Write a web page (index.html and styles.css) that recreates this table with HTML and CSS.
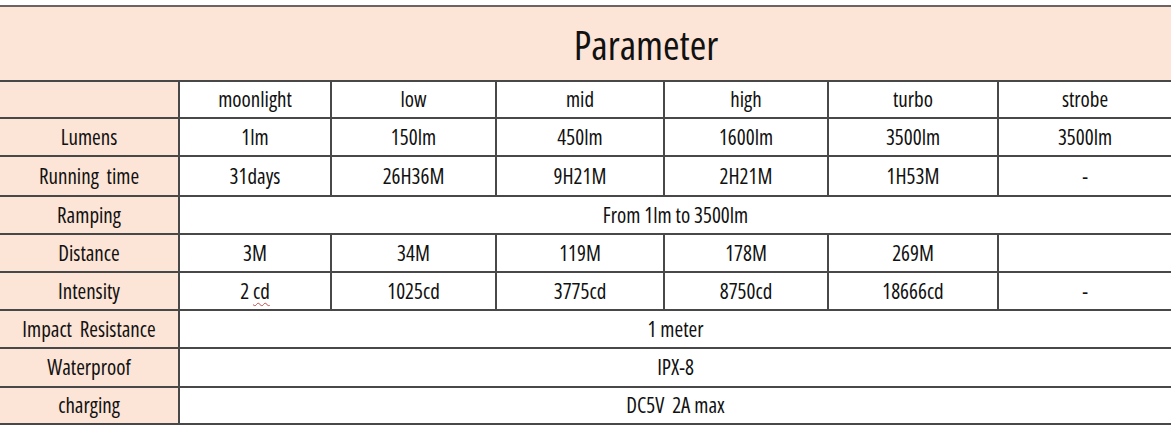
FILE: index.html
```html
<!DOCTYPE html>
<html>
<head>
<meta charset="utf-8">
<link rel="stylesheet" href="styles.css">
</head>
<body>
<table class="spec">
  <colgroup>
    <col class="c-label">
    <col class="c1"><col class="c2"><col class="c3"><col class="c4"><col class="c5"><col class="c6">
  </colgroup>
  <tr class="r-title"><td class="title" colspan="7">Parameter</td></tr>
  <tr class="r-head">
    <td class="label"></td>
    <td>moonlight</td><td>low</td><td>mid</td><td>high</td><td>turbo</td><td>strobe</td>
  </tr>
  <tr class="r1">
    <td class="label">Lumens</td>
    <td>1lm</td><td>150lm</td><td>450lm</td><td>1600lm</td><td>3500lm</td><td>3500lm</td>
  </tr>
  <tr class="r2">
    <td class="label">Running&nbsp; time</td>
    <td>31days</td><td>26H36M</td><td>9H21M</td><td>2H21M</td><td>1H53M</td><td>-</td>
  </tr>
  <tr class="r3">
    <td class="label">Ramping</td>
    <td colspan="6">From 1lm to 3500lm</td>
  </tr>
  <tr class="r4">
    <td class="label">Distance</td>
    <td>3M</td><td>34M</td><td>119M</td><td>178M</td><td>269M</td><td></td>
  </tr>
  <tr class="r5">
    <td class="label">Intensity</td>
    <td>2 <span class="spell">cd</span></td><td>1025cd</td><td>3775cd</td><td>8750cd</td><td>18666cd</td><td>-</td>
  </tr>
  <tr class="r6">
    <td class="label">Impact&nbsp; Resistance</td>
    <td colspan="6">1 meter</td>
  </tr>
  <tr class="r7">
    <td class="label">Waterproof</td>
    <td colspan="6">IPX-8</td>
  </tr>
  <tr class="r8">
    <td class="label">charging</td>
    <td colspan="6">DC5V&nbsp; 2A max</td>
  </tr>
</table>
</body>
</html>
```
FILE: styles.css
```css
html, body {
  margin: 0;
  padding: 0;
  background: #ffffff;
}

body {
  padding-top: 5px;
}

.spec {
  border-collapse: collapse;
  table-layout: fixed;
  width: 1172px;
  font-family: "Open Sans", "Liberation Sans", sans-serif;
  font-stretch: 75%;
  font-size: 21px;
  font-weight: 500;
  color: #111111;
}

.c-label { width: 179px; }
.c1 { width: 152px; }
.c2 { width: 165px; }
.c3 { width: 168px; }
.c4 { width: 164px; }
.c5 { width: 170px; }
.c6 { width: 174px; }

.spec td {
  border: 2px solid #484848;
  padding: 0;
  text-align: center;
  vertical-align: middle;
  line-height: 1;
  white-space: nowrap;
}

.spec tr > td:first-child {
  border-left: none;
}

.title {
  background: #fce4d6;
  font-size: 40px;
  font-weight: 400;
  padding-left: 120px !important;
  padding-top: 2px !important;
  border-top: 2px solid #6b6462 !important;
  border-right: none !important;
}

.label {
  background: #fce4d6;
}

.r-title { height: 75px; }
.r-head { height: 37px; }
.r1 { height: 38px; }
.r2 { height: 40px; }
.r3 { height: 38px; }
.r4 { height: 38px; }
.r5 { height: 38px; }
.r6 { height: 38px; }
.r7 { height: 39px; }
.r8 { height: 37px; }

.spell {
  text-decoration: underline wavy #c0504d;
  text-decoration-thickness: 1px;
  text-underline-offset: 3px;
}
```
